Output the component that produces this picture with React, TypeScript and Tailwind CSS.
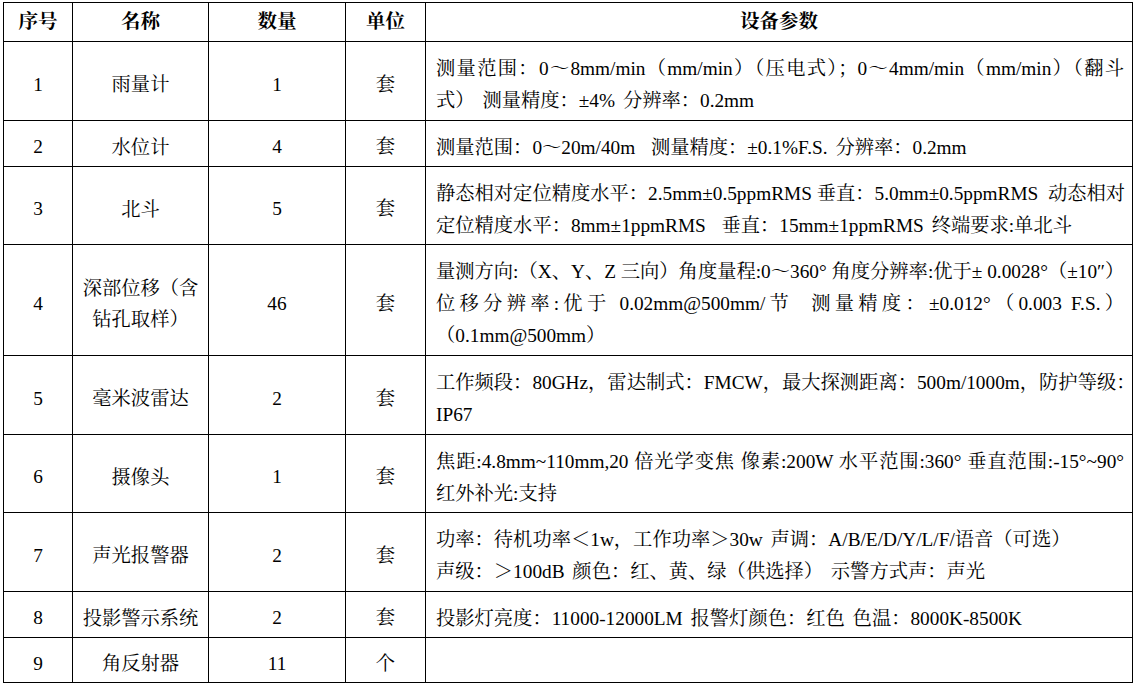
import React from 'react';

type Line = { text: string; justify?: boolean };

type Row = {
  no: string;
  name: string[];
  qty: string;
  unit: string;
  desc: Line[];
  h: string;
};

const rows: Row[] = [
  {
    no: '1',
    name: ['雨量计'],
    qty: '1',
    unit: '套',
    h: 'h-[79px]',
    desc: [
      { text: '测量范围：0～8mm/min（mm/min）（压电式）；0～4mm/min（mm/min）（翻斗', justify: true },
      { text: '式） 测量精度：±4% 分辨率：0.2mm' },
    ],
  },
  {
    no: '2',
    name: ['水位计'],
    qty: '4',
    unit: '套',
    h: 'h-[46px]',
    desc: [{ text: '测量范围：0～20m/40m  测量精度：±0.1%F.S. 分辨率：0.2mm' }],
  },
  {
    no: '3',
    name: ['北斗'],
    qty: '5',
    unit: '套',
    h: 'h-[78px]',
    desc: [
      { text: '静态相对定位精度水平：2.5mm±0.5ppmRMS 垂直：5.0mm±0.5ppmRMS  动态相对', justify: true },
      { text: '定位精度水平：8mm±1ppmRMS  垂直：15mm±1ppmRMS 终端要求:单北斗' },
    ],
  },
  {
    no: '4',
    name: ['深部位移（含', '钻孔取样）'],
    qty: '46',
    unit: '套',
    h: 'h-[111px]',
    desc: [
      { text: '量测方向:（X、Y、Z 三向）角度量程:0～360° 角度分辨率:优于± 0.0028°（±10″）', justify: true },
      { text: '位移分辨率:优于 0.02mm@500mm/节  测量精度：±0.012°（0.003 F.S.）', justify: true },
      { text: '（0.1mm@500mm）' },
    ],
  },
  {
    no: '5',
    name: ['毫米波雷达'],
    qty: '2',
    unit: '套',
    h: 'h-[79px]',
    desc: [
      { text: '工作频段：80GHz，雷达制式：FMCW，最大探测距离：500m/1000m，防护等级：', justify: true },
      { text: 'IP67' },
    ],
  },
  {
    no: '6',
    name: ['摄像头'],
    qty: '1',
    unit: '套',
    h: 'h-[78px]',
    desc: [
      { text: '焦距:4.8mm~110mm,20 倍光学变焦 像素:200W 水平范围:360° 垂直范围:-15°~90°', justify: true },
      { text: '红外补光:支持' },
    ],
  },
  {
    no: '7',
    name: ['声光报警器'],
    qty: '2',
    unit: '套',
    h: 'h-[79px]',
    desc: [
      { text: '功率：待机功率＜1w，工作功率＞30w 声调：A/B/E/D/Y/L/F/语音（可选）' },
      { text: '声级：＞100dB 颜色：红、黄、绿（供选择） 示警方式声：声光' },
    ],
  },
  {
    no: '8',
    name: ['投影警示系统'],
    qty: '2',
    unit: '套',
    h: 'h-[46px]',
    desc: [{ text: '投影灯亮度：11000-12000LM 报警灯颜色：红色 色温：8000K-8500K' }],
  },
  {
    no: '9',
    name: ['角反射器'],
    qty: '11',
    unit: '个',
    h: 'h-[45px]',
    desc: [],
  },
];

const cell = 'border border-black align-middle text-center pt-[7px] pb-0 px-0';

const App: React.FC = () => {
  return (
    <div className="min-h-screen bg-white pt-[2px] pl-[3px] font-['Liberation_Serif','Noto_Serif_CJK_SC','Noto_Sans_CJK_SC',serif] text-[19.3px] text-black leading-[32px]">
      <table className="table-fixed border-collapse w-[1129px]">
        <colgroup>
          <col className="w-[69px]" />
          <col className="w-[136px]" />
          <col className="w-[137px]" />
          <col className="w-[80px]" />
          <col className="w-[707px]" />
        </colgroup>
        <thead>
          <tr className="h-[39px] font-bold text-[19.5px]">
            <th className="border border-black align-middle text-center p-0">序号</th>
            <th className="border border-black align-middle text-center p-0">名称</th>
            <th className="border border-black align-middle text-center p-0">数量</th>
            <th className="border border-black align-middle text-center p-0">单位</th>
            <th className="border border-black align-middle text-center p-0">设备参数</th>
          </tr>
        </thead>
        <tbody>
          {rows.map((row) => (
            <tr key={row.no} className={row.h}>
              <td className={cell}>{row.no}</td>
              <td className={cell}>
                {row.name.map((n) => (
                  <div key={n} className="leading-[31px]">{n}</div>
                ))}
              </td>
              <td className={cell}>{row.qty}</td>
              <td className={cell}>{row.unit}</td>
              <td className="border border-black align-middle text-left pt-[8px] pb-0 pl-[10px] pr-[8px]">
                {row.desc.map((line, i) => (
                  <div
                    key={i}
                    className={
                      line.justify
                        ? 'whitespace-pre text-justify [text-align-last:justify]'
                        : 'whitespace-pre [word-spacing:3px]'
                    }
                  >
                    {line.text}
                  </div>
                ))}
              </td>
            </tr>
          ))}
        </tbody>
      </table>
    </div>
  );
};

export default App;
